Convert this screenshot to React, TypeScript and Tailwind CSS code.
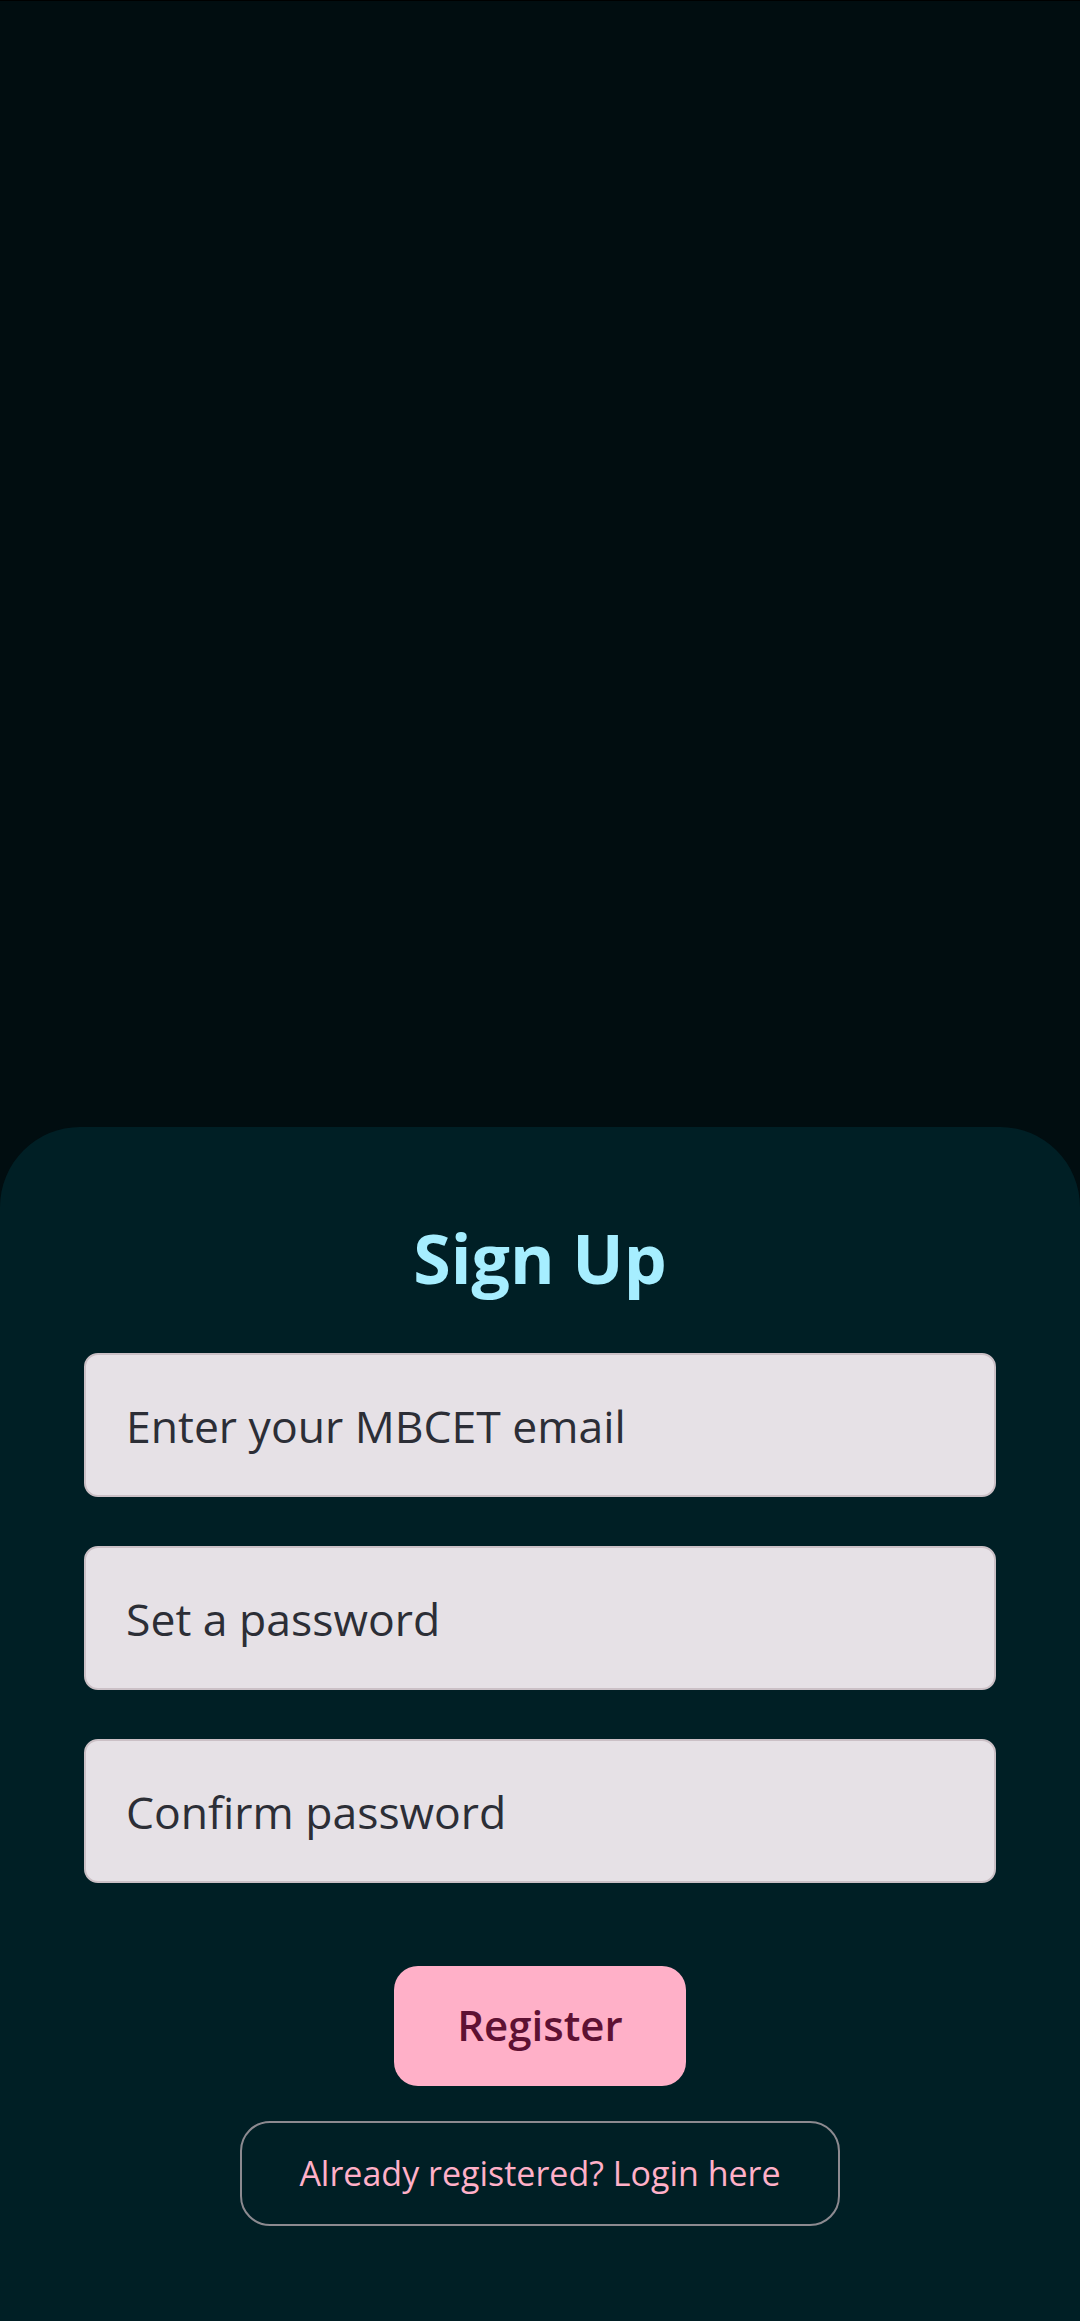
import { useState } from "react";

// Campo de texto do formulário
const Field = ({
  placeholder,
  type = "text",
}: {
  placeholder: string;
  type?: string;
}) => {
  const [value, setValue] = useState("");
  return (
    <input
      type={type}
      value={value}
      onChange={(e) => setValue(e.target.value)}
      placeholder={placeholder}
      className="h-[144px] w-full rounded-[14px] border-2 border-[#cbc0c6] bg-[#e6e1e6] px-[40px] text-[44.5px] text-[#2c2e36] outline-none placeholder:text-[#2c2e36]"
    />
  );
};

export default function App() {
  return (
    <div
      className="flex min-h-[2321px] flex-col border-t border-black bg-[#010d10]"
      style={{ fontFamily: '"Open Sans", "Noto Sans", sans-serif' }}
    >
      {/* área vazia superior */}
      <div className="h-[1126px] shrink-0" />

      {/* cartão de cadastro */}
      <div className="flex flex-1 flex-col items-center rounded-t-[80px] bg-[#001f25] px-[84px] pt-[97px]">
        <h1 className="text-[68px] font-bold leading-none text-[#a6eeff]">
          Sign Up
        </h1>

        <div className="mt-[61px] flex w-full flex-col gap-[49px]">
          <Field placeholder="Enter your MBCET email" type="email" />
          <Field placeholder="Set a password" type="password" />
          <Field placeholder="Confirm password" type="password" />
        </div>

        <button className="mt-[83px] flex h-[120px] w-[292px] items-center justify-center rounded-[24px] bg-[#ffb0c8] pb-[4px] text-[42px] font-semibold text-[#5e1133]">
          Register
        </button>

        <button className="mt-[35px] flex h-[105px] w-[600px] items-center justify-center rounded-[30px] border-2 border-[#8c8a90] text-[34px] text-[#ffb0c8]">
          Already registered? Login here
        </button>
      </div>
    </div>
  );
}
